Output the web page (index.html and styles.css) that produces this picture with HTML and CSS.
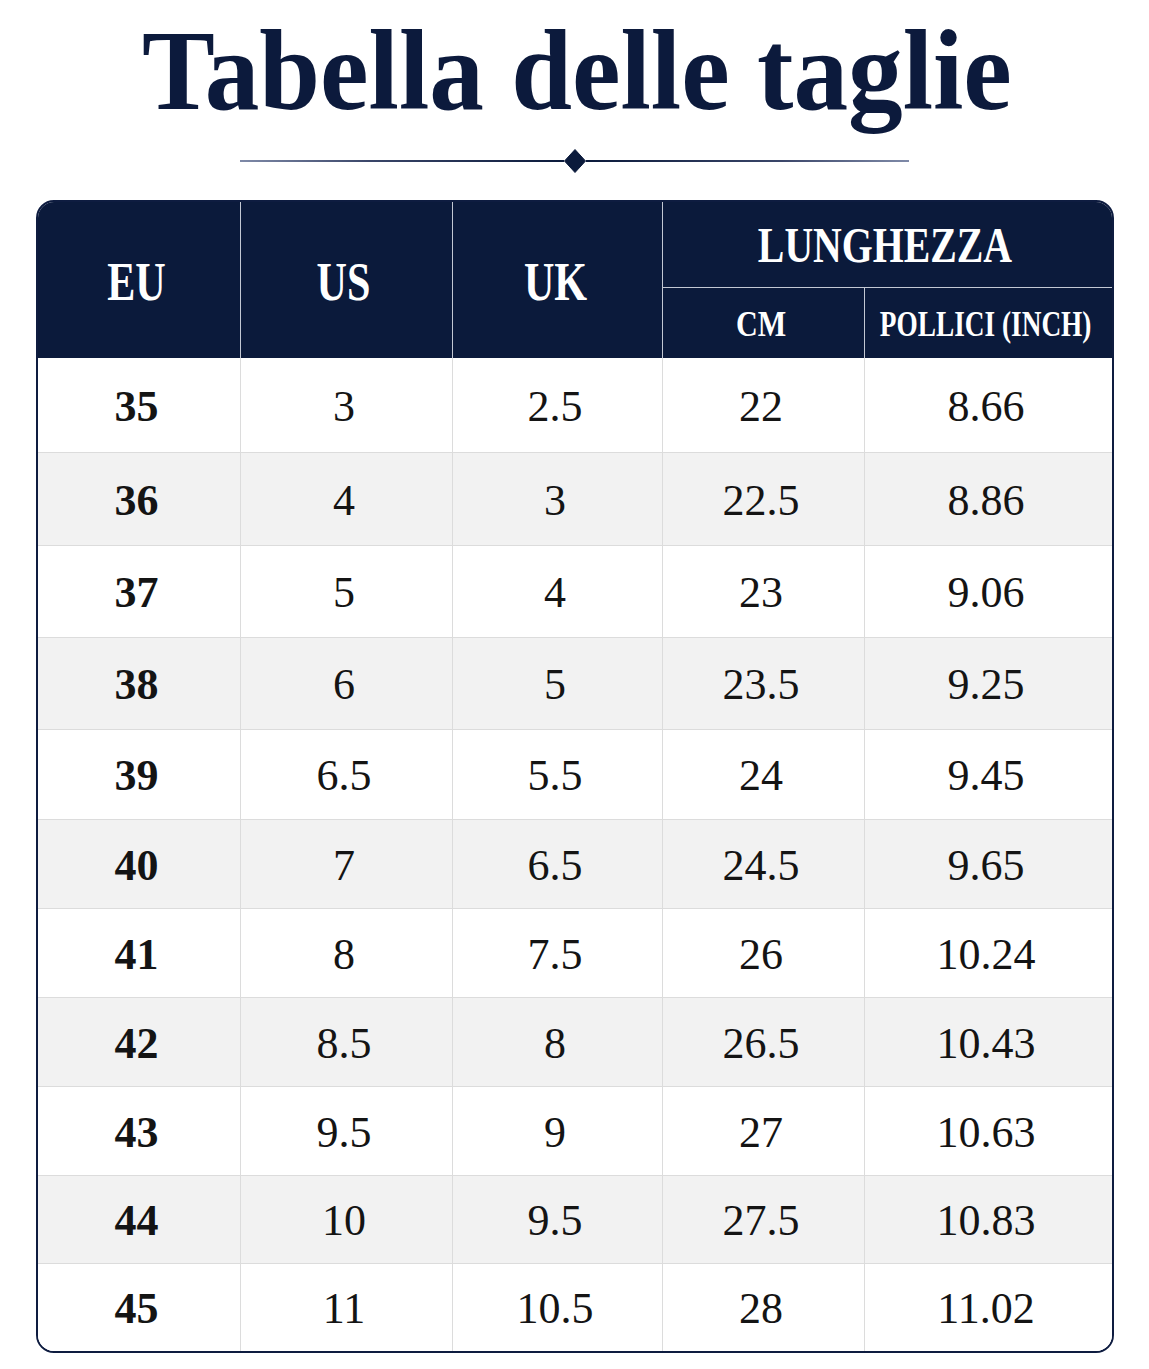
FILE: index.html
```html
<!DOCTYPE html>
<html lang="it">
<head>
<meta charset="utf-8">
<title>Tabella delle taglie</title>
<link rel="stylesheet" href="styles.css">
</head>
<body>
<main class="page">
  <h1 class="title"><span class="title-text">Tabella delle taglie</span></h1>
  <div class="divider">
    <span class="rule rule-left"></span>
    <svg class="diamond" width="22" height="24" viewBox="0 0 22 24" aria-hidden="true"><polygon points="11,0.5 21.5,12 11,23.5 0.5,12" fill="#0b1a3b" stroke="#0b1a3b" stroke-linejoin="round" stroke-width="1"/></svg>
    <span class="rule rule-right"></span>
  </div>
  <div class="chart">
    <table class="sizes">
      <colgroup>
        <col class="c-eu"><col class="c-us"><col class="c-uk"><col class="c-cm"><col class="c-in">
      </colgroup>
      <thead>
        <tr class="hr-1">
          <th rowspan="2" class="sep"><span class="lbl lbl-main">EU</span></th>
          <th rowspan="2" class="sep"><span class="lbl lbl-main">US</span></th>
          <th rowspan="2" class="sep"><span class="lbl lbl-main">UK</span></th>
          <th colspan="2" class="group"><span class="lbl lbl-group">LUNGHEZZA</span></th>
        </tr>
        <tr class="hr-2">
          <th class="sep"><span class="lbl lbl-sub lbl-cm">CM</span></th>
          <th><span class="lbl lbl-sub">POLLICI (INCH)</span></th>
        </tr>
      </thead>
      <tbody>
        <tr><td class="eu">35</td><td>3</td><td>2.5</td><td>22</td><td>8.66</td></tr>
        <tr><td class="eu">36</td><td>4</td><td>3</td><td>22.5</td><td>8.86</td></tr>
        <tr><td class="eu">37</td><td>5</td><td>4</td><td>23</td><td>9.06</td></tr>
        <tr><td class="eu">38</td><td>6</td><td>5</td><td>23.5</td><td>9.25</td></tr>
        <tr><td class="eu">39</td><td>6.5</td><td>5.5</td><td>24</td><td>9.45</td></tr>
        <tr><td class="eu">40</td><td>7</td><td>6.5</td><td>24.5</td><td>9.65</td></tr>
        <tr><td class="eu">41</td><td>8</td><td>7.5</td><td>26</td><td>10.24</td></tr>
        <tr><td class="eu">42</td><td>8.5</td><td>8</td><td>26.5</td><td>10.43</td></tr>
        <tr><td class="eu">43</td><td>9.5</td><td>9</td><td>27</td><td>10.63</td></tr>
        <tr><td class="eu">44</td><td>10</td><td>9.5</td><td>27.5</td><td>10.83</td></tr>
        <tr><td class="eu">45</td><td>11</td><td>10.5</td><td>28</td><td>11.02</td></tr>
      </tbody>
    </table>
  </div>
</main>
</body>
</html>
```

FILE: styles.css
```css
* { box-sizing: border-box; }

body {
  margin: 0;
  background: #ffffff;
  font-family: "Liberation Serif", "Times New Roman", serif;
}

.page {
  display: flex;
  flex-direction: column;
  align-items: center;
}

.title {
  margin: 13px 0 0 4px;
  font-size: 115px;
  line-height: 115px;
  font-weight: 700;
  color: #0c1a3c;
  white-space: nowrap;
}

.title-text {
  display: inline-block;
  transform: scaleX(0.95);
}

.divider {
  display: flex;
  align-items: center;
  width: 669px;
  height: 24px;
  margin-top: 21px;
}

.rule {
  flex: 1;
  height: 2px;
}

.rule-left {
  background: linear-gradient(to right, #7f8aa8 0%, #3a4669 40%, #0b1a3b 100%);
}

.rule-right {
  background: linear-gradient(to left, #7f8aa8 0%, #3a4669 40%, #0b1a3b 100%);
}

.diamond {
  display: block;
  flex: none;
}

.chart {
  width: 1078px;
  margin-top: 27px;
  border: 2px solid #0e1c40;
  border-radius: 18px;
  overflow: hidden;
  background: #ffffff;
}

.sizes {
  width: 100%;
  table-layout: fixed;
  border-collapse: separate;
  border-spacing: 0;
}

.c-eu { width: 203px; }
.c-us { width: 212px; }
.c-uk { width: 210px; }
.c-cm { width: 202px; }
.c-in { width: 247px; }

.sizes th {
  padding: 0 4px 0 0;
  background: #0b1a3b;
  color: #ffffff;
  font-weight: 700;
  line-height: 1;
  text-align: center;
  vertical-align: middle;
}

.sizes th.sep {
  border-right: 1px solid #c3c8d3;
}

.sizes th.group {
  border-bottom: 1px solid #c3c8d3;
}

.hr-1 { height: 86px; }
.hr-2 { height: 70px; }

.lbl {
  display: inline-block;
  margin: 0 -60px;
  white-space: nowrap;
  transform: scaleX(0.78);
}

.lbl-main { font-size: 54px; padding-top: 3px; }
.lbl-group { font-size: 51px; padding-top: 2px; }
.lbl-sub { font-size: 35px; padding-top: 2px; }
.lbl-cm { transform: scaleX(0.86); }

.sizes td {
  padding: 3px 4px 0 0;
  font-size: 44px;
  line-height: 1;
  color: #141414;
  text-align: center;
  vertical-align: middle;
  background: #ffffff;
  border-right: 1px solid #dcdcdc;
  border-bottom: 1px solid #dcdcdc;
}

.sizes td:last-child {
  border-right: none;
}

.sizes tbody tr:last-child td {
  border-bottom: none;
}

.sizes tbody tr:nth-child(even) td {
  background: #f2f2f2;
}

.sizes td.eu {
  font-weight: 700;
}

.sizes tbody tr { height: 89px; }
.sizes tbody tr:nth-child(1) { height: 95px; }
.sizes tbody tr:nth-child(2) { height: 93px; }
.sizes tbody tr:nth-child(3) { height: 92px; }
.sizes tbody tr:nth-child(4) { height: 92px; }
.sizes tbody tr:nth-child(5) { height: 90px; }
.sizes tbody tr:nth-child(10) { height: 88px; }
.sizes tbody tr:nth-child(11) { height: 87px; }
```
